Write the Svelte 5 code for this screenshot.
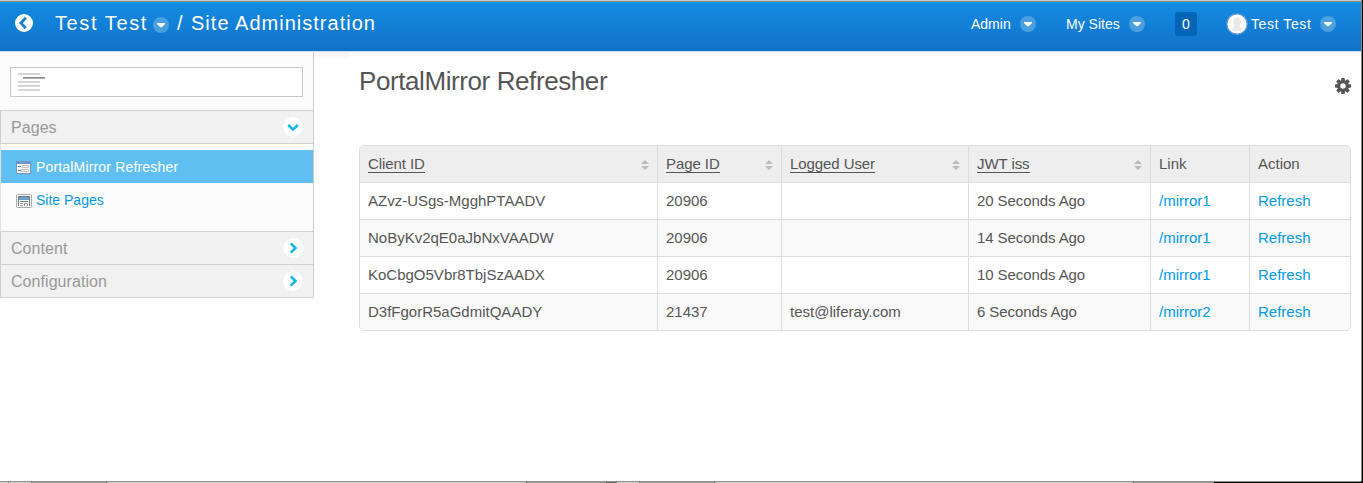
<script>
  const columns = [
    { name: 'Client ID', sort: true, w: 297 },
    { name: 'Page ID', sort: true, w: 124 },
    { name: 'Logged User', sort: true, w: 187 },
    { name: 'JWT iss', sort: true, w: 182 },
    { name: 'Link', sort: false, w: 99 },
    { name: 'Action', sort: false, w: 101 }
  ];
  const rows = [
    ['AZvz-USgs-MgghPTAADV', '20906', '', '20 Seconds Ago', '/mirror1', 'Refresh'],
    ['NoByKv2qE0aJbNxVAADW', '20906', '', '14 Seconds Ago', '/mirror1', 'Refresh'],
    ['KoCbgO5Vbr8TbjSzAADX', '20906', '', '10 Seconds Ago', '/mirror1', 'Refresh'],
    ['D3fFgorR5aGdmitQAADY', '21437', 'test@liferay.com', '6 Seconds Ago', '/mirror2', 'Refresh']
  ];
  const template = columns.map((c) => c.w + 'px').join(' ');
</script>

{#snippet caret()}
  <svg class="caret" width="16" height="16" viewBox="0 0 16 16"><circle cx="8" cy="8" r="8" fill="#4a9fdf" /><path d="M4 6h8v1L8.7 10.2H7.3L4 7z" fill="#fff" /></svg>
{/snippet}

{#snippet toggle(open)}
  <svg width="20" height="20" viewBox="0 0 20 20"><circle cx="10" cy="10" r="10" fill="#fff" /><path d={open ? 'M5.2 8L10 12.6l4.8-4.6' : 'M7.8 5.3l4.7 4.7-4.7 4.7'} fill="none" stroke="#0bb5ea" stroke-width="2.5" /></svg>
{/snippet}

<div class="page">
  <header>
    <svg class="back" width="18" height="18" viewBox="0 0 18 18"><circle cx="9" cy="9" r="9" fill="#fff" /><path d="M10.8 3.8L5.9 9l4.9 5.2" fill="none" stroke="#147fd5" stroke-width="2.8" /></svg>
    <div class="crumb"><span class="site">Test Test</span>{@render caret()}<span class="slash">/</span><span class="area">Site Administration</span></div>
    <nav>
      <span class="admin">Admin</span>{@render caret()}
      <span class="sites">My Sites</span>{@render caret()}
      <span class="count">0</span>
      <svg class="avatar" width="22" height="22" viewBox="0 0 22 22"><circle cx="11" cy="11" r="10.2" fill="#fff" stroke="#5b98df" stroke-width="1.2" /><path d="M11 4.5c-3 0-4 2-3.8 4.5.1 2 .9 2.8 1.3 3.9.3 1.4-2 1.8-2.9 3.2 1.4 1.8 3.2 2.4 5.4 2.4s4-.6 5.4-2.4c-.9-1.4-3.2-1.8-2.9-3.2.4-1.1 1.2-1.9 1.3-3.9C15 6.5 14 4.5 11 4.5z" fill="#e8e8e8" /></svg>
      <span class="user">Test Test</span>{@render caret()}
    </nav>
  </header>

  <div class="body">
    <aside>
      <div class="search">
        <div class="field">
          <svg width="28" height="20" viewBox="0 0 28 20"><path d="M0 1h22M0 9h22M0 13h22M0 17h22" stroke="#d2d2d2" stroke-width="2" /><path d="M5 5h22" stroke="#8e8e8e" stroke-width="2" /><path d="M0 1.5h22M0 9.5h22M0 13.5h22M0 17.5h22M5 5.5h22" stroke="#e4e4e4" stroke-opacity=".35" /></svg>
        </div>
      </div>
      <div class="group"><span>Pages</span>{@render toggle(true)}</div>
      <div class="items">
        <div class="item on">
          <svg width="15" height="13" viewBox="0 0 15 13"><path d="M.5.5h14v12H.5z" fill="#f5f5f5" stroke="#7794c8" /><path d="M0 0h15v3H0z" fill="#7193ce" /><path d="M2 5.5h3M2 9.5h3" stroke="#5579bd" /><path d="M6.5 4.5h6v2h-6zM5.5 8.5h7v2h-7z" fill="#fff" stroke="#c4c4c4" /></svg>
          <span>PortalMirror Refresher</span>
        </div>
        <div class="item">
          <svg width="16" height="14" viewBox="0 0 16 14"><rect x=".5" y=".5" width="15" height="13" rx="1" fill="#f6f6f6" stroke="#aaa" /><path d="M2.5 12V2.5h11V12" fill="#fff" stroke="#777" /><path d="M3 3h10v3H3z" fill="#6f9fcd" /><path d="M4 7h8v1H4z" fill="#4e80b5" /><path d="M4 9.5h3M4 11.5h3M8.5 12V9.5h3V12" fill="none" stroke="#999" /></svg>
          <span>Site Pages</span>
        </div>
      </div>
      <div class="group"><span>Content</span>{@render toggle(false)}</div>
      <div class="group last"><span>Configuration</span>{@render toggle(false)}</div>
    </aside>
    <div class="shade"></div>

    <main>
      <div class="heading">
        <h1>PortalMirror Refresher</h1>
        <svg width="16" height="16" viewBox="0 0 16 16"><g fill="#555">
          {#each [0, 45, 90, 135] as angle}<rect x="6.2" y="0" width="3.6" height="16" rx=".7" transform={`rotate(${angle} 8 8)`} />{/each}
          <circle cx="8" cy="8" r="6" /></g><circle cx="8" cy="8" r="2.7" fill="#fff" /></svg>
      </div>
      <div class="table">
        <div class="row head" style:grid-template-columns={template}>
          {#each columns as col}
            <div class="cell"><span class:sortable={col.sort}>{col.name}</span>
              {#if col.sort}<svg width="8" height="10" viewBox="0 0 8 10"><path d="M4 0l4 4H0zM0 6h8l-4 4z" fill="#bbb" /></svg>{/if}
            </div>
          {/each}
        </div>
        {#each rows as row}
          <div class="row" style:grid-template-columns={template}>
            {#each row as value, i}<div class="cell" class:link={i > 3} class:id={i === 0} class:time={i === 3}>{value}</div>{/each}
          </div>
        {/each}
      </div>
    </main>
  </div>
  <footer></footer>
</div>

<style>
  :global(body) { margin: 0; background: #fff; }
  * { box-sizing: border-box; }
  svg { display: block; flex: none; }
  .page { width: 1363px; height: 483px; display: flex; flex-direction: column; overflow: hidden; font-family: "Liberation Sans", Arial, sans-serif; color: #555; background: linear-gradient(90deg, transparent 1361px, #888 1361px, #888 1362px, #000 1362px); }
  header { height: 52px; width: 1361px; flex: none; display: flex; align-items: flex-start; padding-left: 15px; color: #fff; border-bottom: 1px solid #cfdfef; background: linear-gradient(#c9c9c9 1px, #8b8b8b 1px, #8b8b8b 2px, #00a2ec 2px, #00a2ec 3px, #138be2 3px, #1271c8 51px); }
  .back { margin-top: 14px; }
  .crumb { display: flex; margin-left: 22px; line-height: 24px; padding-top: 11px; font-size: 20px; white-space: nowrap; }
  .site { width: 98px; letter-spacing: 1.6px; }
  .crumb :global(.caret) { margin-top: 6px; }
  .slash { width: 22px; padding-left: 8px; }
  .area { letter-spacing: 1.02px; }
  nav { display: flex; margin-left: auto; padding: 12px 25px 0 0; line-height: 24px; font-size: 14px; white-space: nowrap; }
  nav :global(.caret) { margin-top: 4px; }
  .admin { width: 49px; }
  .sites { width: 63px; margin-left: 30px; }
  .count { width: 22px; height: 24px; margin-left: 30px; border-radius: 3px; background: #0265b5; text-align: center; }
  .avatar { margin: 1px 3px 0 29px; }
  .user { width: 69px; letter-spacing: .6px; }
  .body { display: flex; flex: 1; min-height: 0; width: 1361px; }
  aside { width: 314px; height: 246px; border-right: 1px solid #ccc; background: #fcfcfc; }
  .shade { width: 35px; height: 8px; background: linear-gradient(#f3f3f5, #fff); }
  .search { height: 58px; padding: 15px 10px 0; }
  .field { height: 30px; border: 1px solid #c8c8c8; background: #fff; padding: 5px 7px; }
  .group { height: 34px; display: flex; align-items: center; justify-content: space-between; padding: 0 10px; border: 1px solid #d0d0d0; border-right: 0; background: #f1f1f1; color: #999; font-size: 16px; }
  .group span { padding-top: 2px; letter-spacing: .06px; }
  .items { height: 87px; padding-top: 6px; border-left: 1px solid #e1e1e1; }
  .item { height: 33px; display: flex; align-items: center; padding-left: 15px; color: #009ae5; font-size: 14px; }
  .item svg { margin-top: 2px; }
  .item span { margin-left: 4px; }
  .item.on { background: #5fbff0; color: #fff; }
  .item.on span { margin-left: 5px; letter-spacing: .17px; }
  .last { margin-top: -1px; }
  main { width: 992px; margin-left: 10px; }
  .heading { height: 93px; display: flex; justify-content: space-between; padding-top: 12px; }
  .heading svg { margin: 14px 0 0; }
  h1 { margin: 0; font-size: 26px; line-height: 34px; font-weight: 400; letter-spacing: -.41px; }
  .table { border: 1px solid #ddd; border-radius: 5px; overflow: hidden; font-size: 15px; }
  .row { display: grid; height: 37px; border-top: 1px solid #ddd; background: #fff; }
  .row:nth-child(odd) { background: #f9f9f9; }
  .row.head { height: 36px; border-top: 0; background: #eee; }
  .cell { display: flex; align-items: center; justify-content: space-between; padding: 0 8px; border-left: 1px solid #ddd; line-height: 18px; }
  .cell:first-child { border-left: 0; }
  .cell svg { margin-top: 2px; }
  .sortable { border-bottom: 1px solid #555; line-height: 16px; letter-spacing: -.08px; }
  .time { letter-spacing: -.08px; }
  .link { color: #009ae5; }
  footer { height: 2px; background:
    linear-gradient(#929292, #929292) 0 0 / 1361px 1px no-repeat,
    linear-gradient(90deg, #ccc 8px, #777 8px 9px, #ccc 9px 31px, #666 31px 32px, #999 32px 106px, #555 106px 107px, #ccc 107px 526px, #555 526px 527px, #999 527px 606px, #666 606px 617px, #ccc 617px 639px, #666 639px 640px, #999 640px 714px, #555 714px 715px, #ccc 715px 1133px, #555 1133px 1134px, #999 1134px 1214px, #000 1214px); }
</style>
